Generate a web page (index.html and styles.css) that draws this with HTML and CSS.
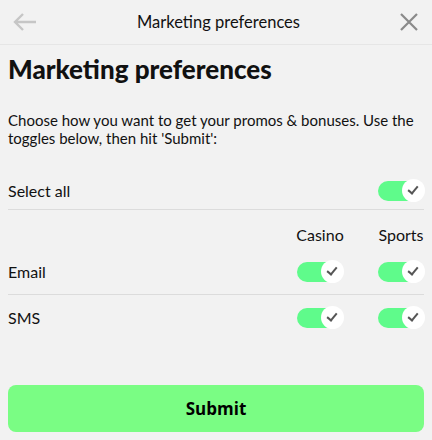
FILE: index.html
```html
<!DOCTYPE html>
<html lang="en">
<head>
    <meta charset="UTF-8" />
    <meta name="viewport" content="width=device-width, initial-scale=1.0" />
    <title>Marketing preferences</title>
    <link rel="stylesheet" href="styles.css">
</head>
<body>
    <header class="topbar">
        <button class="icon-btn back" aria-label="Back">
            <svg width="24" height="20" viewBox="0 0 24 20"><path d="M23 10H2M10 2L2 10l8 8" fill="none" stroke="#c6c6c6" stroke-width="2.4"/></svg>
        </button>
        <div class="topbar-title">Marketing preferences</div>
        <button class="icon-btn close" aria-label="Close">
            <svg width="18" height="18" viewBox="0 0 18 18"><path d="M1 1l16 16M17 1L1 17" fill="none" stroke="#8a8a8a" stroke-width="2.2"/></svg>
        </button>
    </header>

    <main class="content">
        <h1>Marketing preferences</h1>
        <p class="intro">Choose how you want to get your promos &amp; bonuses. Use the toggles below, then hit 'Submit':</p>

        <div class="row select-all">
            <span class="row-label">Select all</span>
            <span class="toggle"><span class="knob"></span></span>
        </div>

        <div class="grid-head">
            <span></span>
            <span class="col-head">Casino</span>
            <span class="col-head">Sports</span>
        </div>

        <div class="row grid-row">
            <span class="row-label">Email</span>
            <span class="toggle"><span class="knob"></span></span>
            <span class="toggle"><span class="knob"></span></span>
        </div>
        <div class="row grid-row last">
            <span class="row-label">SMS</span>
            <span class="toggle"><span class="knob"></span></span>
            <span class="toggle"><span class="knob"></span></span>
        </div>

        <button class="submit">Submit</button>
    </main>
</body>
</html>
```

FILE: styles.css
```css
body {
    margin: 0;
    background-color: #f2f2f2;
    font-family: Lato, 'Noto Sans', sans-serif;
    color: #111;
}

.topbar {
    height: 45px;
    display: flex;
    align-items: center;
    justify-content: space-between;
    padding: 0 14px 0 13px;
    border-bottom: 1px solid #e6e6e6;
    box-sizing: border-box;
}

.icon-btn {
    background: none;
    border: none;
    padding: 0;
    display: flex;
    align-items: center;
}

.topbar-title {
    font-size: 16.5px;
    color: #111;
}

.content {
    padding: 0 8px;
}

h1 {
    font-size: 26px;
    font-weight: 900;
    margin: 9px 0 0;
    line-height: 30px;
}

.intro {
    font-size: 15px;
    line-height: 18px;
    margin: 27px -8px 0 0;
}

.row {
    display: flex;
    align-items: center;
    border-bottom: 1px solid #dcdcdc;
}

.row-label {
    font-size: 16px;
    flex: 1;
}

.select-all {
    margin-top: 25px;
    height: 37px;
}

.grid-head,
.grid-row {
    display: grid;
    grid-template-columns: 1fr 46px 46px;
    column-gap: 35px;
    align-items: center;
}

.grid-head {
    padding-top: 14px;
    height: 20px;
}

.col-head {
    font-size: 16px;
    text-align: center;
    white-space: nowrap;
    justify-self: center;
}

.grid-row {
    height: 45px;
    margin-top: 5px;
}

.grid-row + .grid-row {
    margin-top: 0;
}

.grid-row.last {
    border-bottom: none;
}

.toggle {
    width: 46px;
    height: 20px;
    border-radius: 10px;
    background-color: #5ffb8b;
    position: relative;
    display: block;
}

.knob {
    position: absolute;
    right: -1px;
    top: -1.5px;
    width: 23px;
    height: 23px;
    border-radius: 50%;
    background: #fff;
}

.knob::after {
    content: "";
    position: absolute;
    left: 8px;
    top: 5px;
    width: 4px;
    height: 8px;
    border-right: 2.5px solid #555;
    border-bottom: 2.5px solid #555;
    transform: rotate(40deg);
}

.submit {
    display: block;
    width: 100%;
    height: 47px;
    margin-top: 45px;
    border: none;
    border-radius: 8px;
    background-color: #7afd84;
    font-family: 'Open Sans', sans-serif;
    font-weight: 700;
    font-size: 17px;
    color: #000;
}
```
